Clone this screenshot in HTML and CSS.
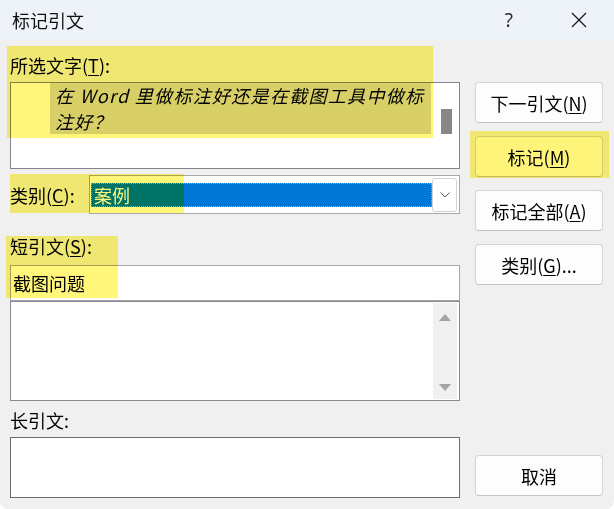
FILE: index.html
```html
<!DOCTYPE html>
<html lang="zh-CN">
<head>
<meta charset="UTF-8">
<title>标记引文</title>
<link rel="stylesheet" href="styles.css">
</head>
<body>
<div class="window">
  <div class="titlebar">
    <span class="title">标记引文</span>
    <span class="help">?</span>
    <svg class="close" width="16" height="16" viewBox="0 0 16 16"><path d="M1 1L15 15M15 1L1 15" stroke="#1a1a1a" stroke-width="1.3" fill="none"/></svg>
  </div>

  <div class="main">
    <div class="left">
      <div class="label first">所选文字(<u>T</u>):</div>
      <div class="selbox">
        <div class="seltext">在 Word 里做标注好还是在截图工具中做标<br>注好？</div>
        <div class="thumb"></div>
      </div>

      <div class="catrow">
        <span class="label catlabel">类别(<u>C</u>):</span>
        <div class="combo">
          <div class="combo-value">案例</div>
          <div class="combo-btn">
            <svg width="10" height="6" viewBox="0 0 10 6"><path d="M0.5 0.5L5 5L9.5 0.5" stroke="#5a5a5a" stroke-width="1" fill="none"/></svg>
          </div>
        </div>
      </div>

      <div class="label short">短引文(<u>S</u>):</div>
      <div class="input">截图问题</div>
      <div class="listbox">
        <div class="track">
          <span class="arrow up"></span>
          <span class="arrow down"></span>
        </div>
      </div>

      <div class="label long">长引文:</div>
      <div class="longbox"></div>
    </div>

    <div class="right">
      <button class="btn">下一引文(<u>N</u>)</button>
      <button class="btn">标记(<u>M</u>)</button>
      <button class="btn">标记全部(<u>A</u>)</button>
      <button class="btn">类别(<u>G</u>)...</button>
      <button class="btn cancel">取消</button>
    </div>
  </div>

  <!-- highlight marks laid over the dialog -->
  <div class="mark mark-sel"></div>
  <div class="mark mark-cat"></div>
  <div class="mark mark-short"></div>
  <div class="mark mark-btn"></div>
</div>
</body>
</html>
```

FILE: styles.css
```css
html,body{margin:0;padding:0;background:#fff;}
body{font-family:"Noto Sans CJK SC","Noto Sans",sans-serif;color:#000;}
.window{position:relative;width:614px;height:509px;background:#f0f0f0;border-radius:0 0 8px 8px;overflow:hidden;}

.titlebar{height:40px;background:#eef2f9;display:flex;align-items:center;padding:0 27px 0 12px;box-sizing:border-box;}
.title{font-size:18px;flex:1;color:#111;}
.help{font-size:19px;color:#2a2a2a;margin-right:58px;font-family:"Noto Sans",sans-serif;}
.close{display:block;margin-top:-1px;}

.main{display:flex;gap:15px;height:469px;padding:0 11px 0 10px;box-sizing:border-box;}
.left{width:450px;display:flex;flex-direction:column;}
.right{width:128px;display:flex;flex-direction:column;padding:42px 0 13px;box-sizing:border-box;}

.label{font-size:18px;line-height:22px;height:22px;white-space:nowrap;}
.label u{text-underline-offset:2px;}
.first{margin-top:14px;}
.short{margin-top:21px;}
.long{margin-top:8px;}

.selbox{margin-top:6px;height:87px;box-sizing:border-box;border:1px solid #83838f;background:#fff;display:flex;padding-left:39px;}
.seltext{width:381px;height:51px;background:#d8d8d8;font-size:18px;line-height:25.5px;letter-spacing:1.3px;font-style:italic;padding-left:5px;box-sizing:border-box;white-space:nowrap;overflow:hidden;}
.thumb{width:11px;height:25px;background:#878787;margin:26px 0 0 10px;}

.catrow{display:flex;align-items:center;margin-top:6px;}
.catlabel{width:79px;}
.combo{width:371px;height:39px;box-sizing:border-box;border:1px solid #a9a9a9;background:#fff;display:flex;align-items:center;padding:0 2px 0 1px;}
.combo-value{flex:1;height:24px;background:#0078d7;border:1px dotted #e79a3a;box-sizing:border-box;color:#fff;font-size:18px;line-height:22px;padding-left:2px;}
.combo-btn{width:25px;height:34px;box-sizing:border-box;border:1px solid #d2d2d2;border-radius:3px;background:#fff;display:flex;align-items:center;justify-content:center;}

.input{margin-top:8px;height:36px;box-sizing:border-box;border:1px solid #a6a6a6;background:#fff;font-size:18px;line-height:34px;padding-left:2px;}
.listbox{height:100px;box-sizing:border-box;border:1px solid #8a8a96;background:#fff;display:flex;justify-content:flex-end;padding:1px 2px 1px 0;}
.track{width:24px;background:#f0f0f0;display:flex;flex-direction:column;align-items:center;justify-content:space-between;padding:11px 0 8px;box-sizing:border-box;}
.arrow{width:0;height:0;border-left:6px solid transparent;border-right:6px solid transparent;}
.arrow.up{border-bottom:7px solid #a3a3a3;}
.arrow.down{border-top:7px solid #a3a3a3;}
.longbox{margin-top:6px;height:61px;box-sizing:border-box;border:1px solid #6b6b6b;background:#fff;}

.btn{height:41px;margin-bottom:13px;background:#fdfdfd;border:1px solid #d3d3d3;border-bottom-color:#c4c4c4;border-radius:4px;font-family:inherit;font-size:18px;color:#000;padding:0;}
.btn u{text-underline-offset:2px;}
.cancel{margin:auto 0 0;}

.mark{position:absolute;background:#fff67a;mix-blend-mode:multiply;pointer-events:none;}
.mark-sel{left:7px;top:46px;width:426px;height:92px;}
.mark-cat{left:10px;top:174px;width:174px;height:39px;}
.mark-short{left:6px;top:236px;width:112px;height:62px;}
.mark-btn{left:470px;top:131px;width:139px;height:47px;}
```
